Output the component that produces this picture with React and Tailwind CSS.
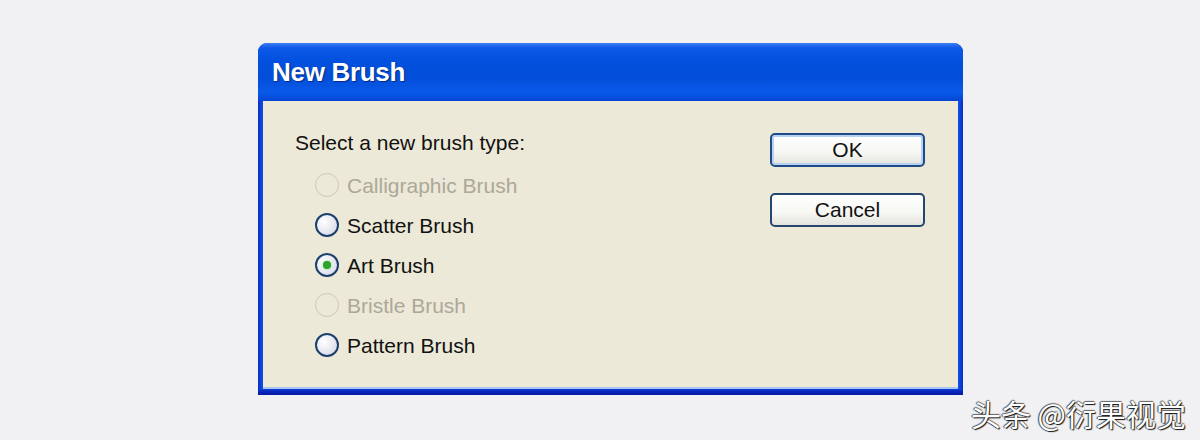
import React from 'react';

const options = [
  { label: 'Calligraphic Brush', disabled: true },
  { label: 'Scatter Brush' },
  { label: 'Art Brush', checked: true },
  { label: 'Bristle Brush', disabled: true },
  { label: 'Pattern Brush' },
];

const Radio = ({ label, disabled, checked }) => (
  <div className="flex items-center h-[40px]">
    {disabled ? (
      <span className="w-[24px] h-[24px] rounded-full border-[1.5px] border-[#cbc8bb] shrink-0" />
    ) : (
      <span className="w-[24px] h-[24px] rounded-full border-2 border-[#1c3f6e] bg-[radial-gradient(circle_at_35%_35%,#ffffff_0%,#e6e8f0_55%,#cdd2e0_100%)] shrink-0 flex items-center justify-center">
        {checked && <span className="w-[8px] h-[8px] rounded-full bg-[#2aa52a] shadow-[0_0_2px_#5fd35f]" />}
      </span>
    )}
    <span className={`ml-[8px] text-[21px] leading-none ${disabled ? 'text-[#aca899]' : 'text-[#111]'}`}>
      {label}
    </span>
  </div>
);

const Button = ({ children, primary }) => (
  <div
    className={`w-[155px] h-[34px] rounded-[5px] flex items-center justify-center text-[21px] text-[#111] bg-[linear-gradient(180deg,#ffffff_0%,#f6f6f3_60%,#e4e3dc_100%)] ${
      primary
        ? 'border-2 border-[#1f4c86] shadow-[inset_0_0_0_2px_#b9d1f5]'
        : 'border-2 border-[#24466f]'
    }`}
  >
    {children}
  </div>
);

export default function App() {
  return (
    <div
      className="relative w-[1200px] h-[440px] bg-[#f1f1f3] pt-[43px] pl-[258px]"
      style={{ fontFamily: '"Liberation Sans", Arial, sans-serif' }}
    >
      <div className="w-[705px] h-[352px] flex flex-col rounded-t-[9px] overflow-hidden bg-[#0a2cc4]">
        <div className="h-[58px] shrink-0 flex items-center pl-[14px] bg-[linear-gradient(180deg,#3d80f2_0%,#0f5ae8_8%,#0250de_30%,#024ed8_60%,#0a5aea_85%,#0444d2_100%)]">
          <span className="text-white font-bold text-[26px] tracking-[-0.3px] [text-shadow:1px_1px_1px_#0a2a80]">
            New Brush
          </span>
        </div>
        <div className="flex-1 flex px-[5px] bg-[linear-gradient(90deg,#0a2cc4_0%,#0d4ee6_0.6%,#0d4ee6_99.4%,#0a2cc4_100%)]">
          <div className="flex-1 flex bg-[#ece9d8] border-b-2 border-[#a9c6f2]">
            <div className="flex-1 pl-[32px] pt-[31px]">
              <div className="text-[21px] leading-none text-[#111]">Select a new brush type:</div>
              <div className="pl-[20px] pt-[12px]">
                {options.map((o) => (
                  <Radio key={o.label} {...o} />
                ))}
              </div>
            </div>
            <div className="w-[188px] pt-[32px] flex flex-col gap-[26px]">
              <Button primary>OK</Button>
              <Button>Cancel</Button>
            </div>
          </div>
        </div>
        <div className="h-[6px] shrink-0 bg-[linear-gradient(180deg,#0d3fd8_0%,#0a22b4_50%,#081ca4_100%)]" />
      </div>
      <div
        className="absolute right-[14px] bottom-[12px] text-white text-[30px] leading-none [text-shadow:1px_1px_1px_#111,-1px_0_1px_#444,0_-1px_1px_#666]"
        style={{ fontFamily: '"Noto Sans CJK SC", "Noto Sans", sans-serif' }}
      >
        头条 @衍果视觉
      </div>
    </div>
  );
}
